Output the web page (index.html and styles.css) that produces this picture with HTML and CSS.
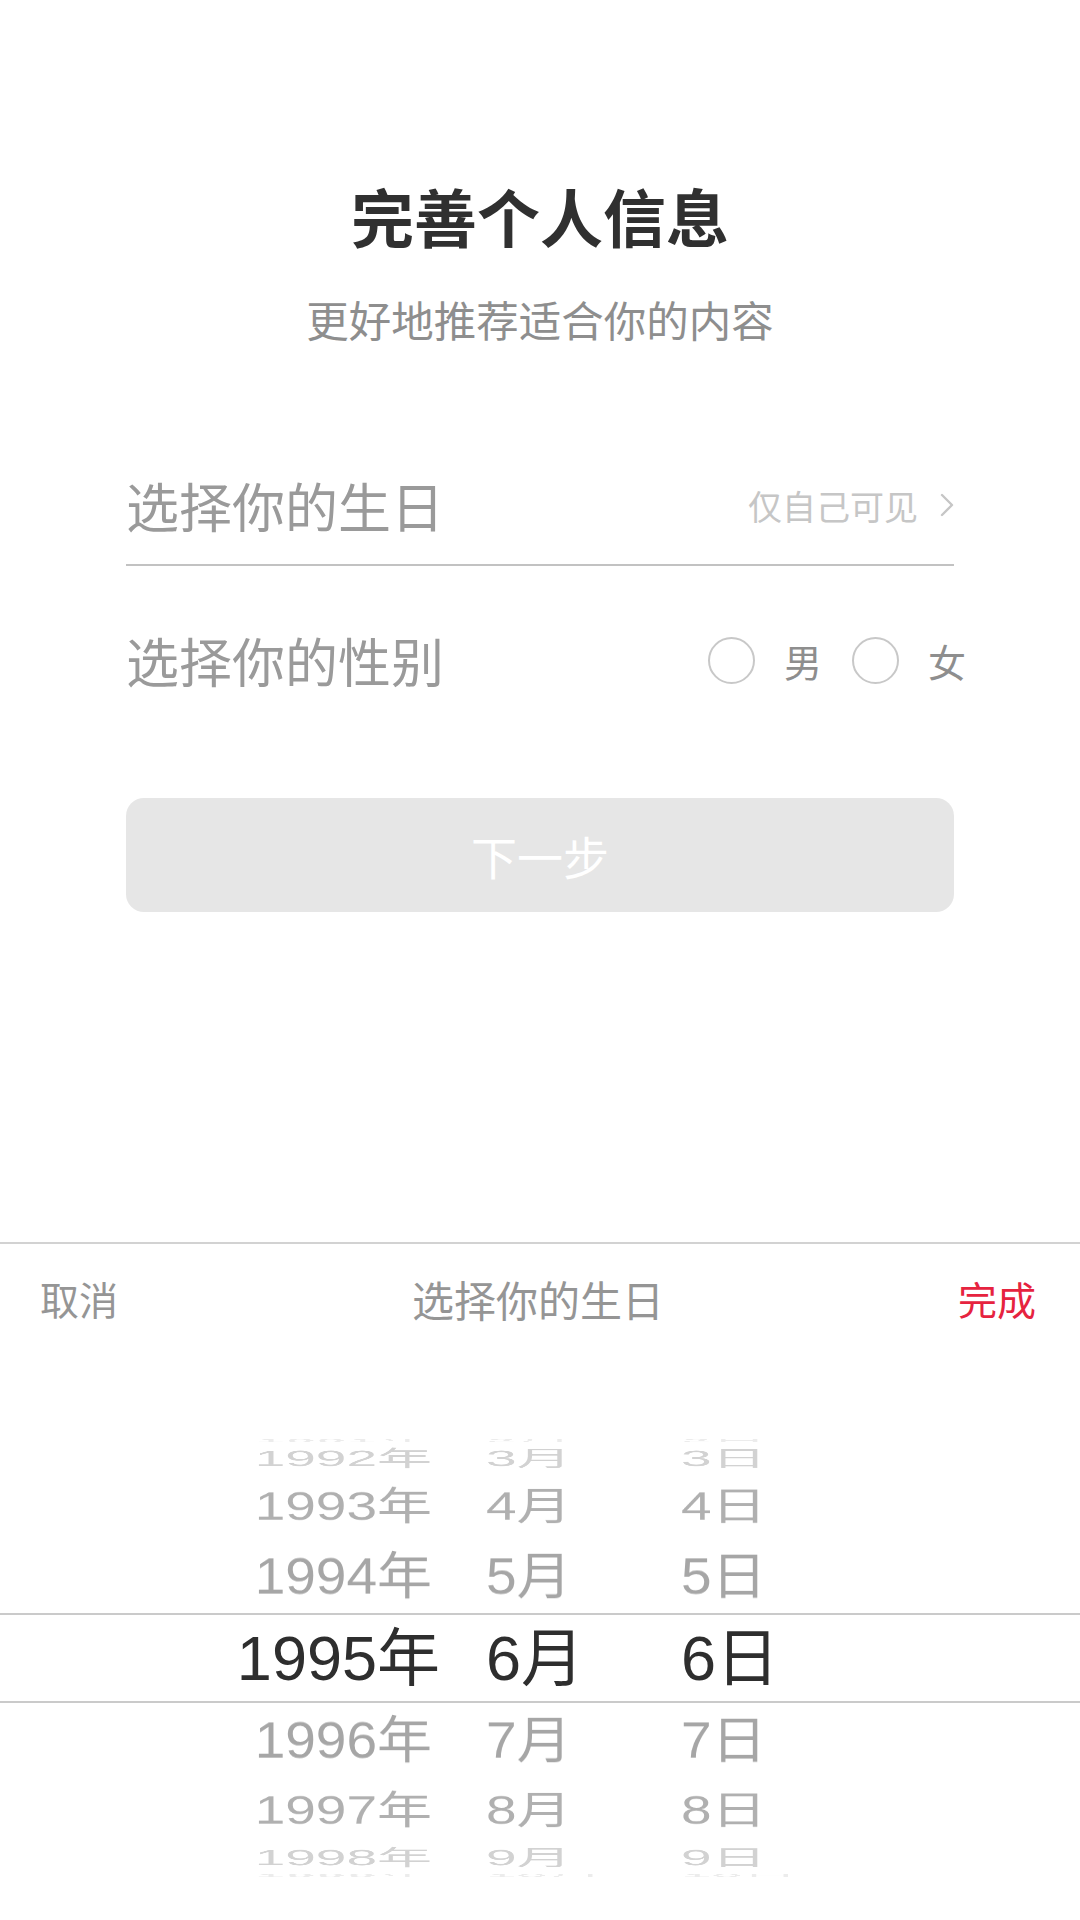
FILE: index.html
```html
<!DOCTYPE html>
<html lang="zh-CN">
  <head>
    <meta charset="UTF-8" />
    <meta name="viewport" content="width=device-width, initial-scale=1.0" />
    <title>完善个人信息</title>
    <link rel="stylesheet" href="styles.css">
  </head>
  <body>
    <div class="page">
      <main class="profile">
        <h1 class="title">完善个人信息</h1>
        <p class="subtitle">更好地推荐适合你的内容</p>

        <div class="field field-birthday">
          <span class="label">选择你的生日</span>
          <span class="hint">
            仅自己可见
            <svg class="chevron" width="14" height="24" viewBox="0 0 14 24">
              <polyline points="2,2 12,12 2,22" fill="none" stroke="#c6c6c6" stroke-width="2.4" stroke-linecap="round" stroke-linejoin="round" />
            </svg>
          </span>
        </div>

        <div class="field field-gender">
          <span class="label">选择你的性别</span>
          <div class="genders">
            <label class="gender"><i class="radio"></i>男</label>
            <label class="gender"><i class="radio"></i>女</label>
          </div>
        </div>

        <button class="next" disabled>下一步</button>
      </main>

      <section class="sheet">
        <header class="sheet-bar">
          <span class="cancel">取消</span>
          <span class="sheet-title">选择你的生日</span>
          <span class="done">完成</span>
        </header>

        <div class="wheel">
          <div class="band"></div>
          <div class="col col-year">
            <span class="up4">1991年</span>
            <span class="up3">1992年</span>
            <span class="up2">1993年</span>
            <span class="up1">1994年</span>
            <span class="sel">1995年</span>
            <span class="dn1">1996年</span>
            <span class="dn2">1997年</span>
            <span class="dn3">1998年</span>
            <span class="dn4">1999年</span>
          </div>
          <div class="col col-month">
            <span class="up4">2月</span>
            <span class="up3">3月</span>
            <span class="up2">4月</span>
            <span class="up1">5月</span>
            <span class="sel">6月</span>
            <span class="dn1">7月</span>
            <span class="dn2">8月</span>
            <span class="dn3">9月</span>
            <span class="dn4">10月</span>
          </div>
          <div class="col col-day">
            <span class="up4">2日</span>
            <span class="up3">3日</span>
            <span class="up2">4日</span>
            <span class="up1">5日</span>
            <span class="sel">6日</span>
            <span class="dn1">7日</span>
            <span class="dn2">8日</span>
            <span class="dn3">9日</span>
            <span class="dn4">10日</span>
          </div>
        </div>
      </section>
    </div>
  </body>
</html>
```

FILE: styles.css
```css
body {
  margin: 0;
  padding: 0;
  background: #fff;
  font-family: "Noto Sans CJK SC", sans-serif;
  color: #999;
}

.page {
  min-height: 100vh;
  display: flex;
  flex-direction: column;
}

/* top form */
.profile {
  padding: 171px 126px 0;
  display: flex;
  flex-direction: column;
}
.title {
  margin: 0;
  font-size: 63px;
  line-height: 88px;
  font-weight: bold;
  color: #303030;
  text-align: center;
}
.subtitle {
  margin: 30px 0 0;
  font-size: 42.5px;
  line-height: 60px;
  color: #8e8e8e;
  text-align: center;
}

.field {
  display: flex;
  align-items: center;
  justify-content: space-between;
}
.field .label {
  font-size: 53px;
  color: #9a9a9a;
}
.field-birthday {
  margin-top: 103px;
  height: 106px;
  padding-bottom: 6px;
  border-bottom: 2px solid #c2c2c2;
}
.hint {
  display: flex;
  align-items: center;
  gap: 22px;
  font-size: 34px;
  color: #c6c6c6;
}
.chevron {
  display: block;
}

.field-gender {
  margin-top: 40px;
  height: 108px;
}
.genders {
  display: flex;
  align-items: center;
  gap: 30px;
  margin-right: -12px;
}
.gender {
  display: flex;
  align-items: center;
  gap: 29px;
  font-size: 38px;
  color: #8e8e8e;
}
.radio {
  width: 43px;
  height: 43px;
  border: 2px solid #c8c8c8;
  border-radius: 50%;
}

.next {
  margin-top: 84px;
  height: 114px;
  border: 0;
  border-radius: 18px;
  background: #e6e6e6;
  color: #fff;
  font-family: inherit;
  font-size: 46px;
  padding: 0;
}

/* date sheet */
.sheet {
  margin-top: auto;
  border-top: 2px solid #d2d2d2;
  padding-bottom: 20px;
}
.sheet-bar {
  height: 108px;
  padding: 0 44px 0 40px;
  display: grid;
  grid-template-columns: 1fr auto 1fr;
  align-items: center;
  font-size: 39px;
}
.cancel {
  color: #959595;
}
.sheet-title {
  font-size: 42px;
  color: #959595;
}
.done {
  justify-self: end;
  color: #e6233f;
}

.wheel {
  position: relative;
  margin-top: 64px;
  height: 484px;
  display: grid;
  grid-template-columns: 440px 195px 1fr;
  overflow: hidden;
  font-family: "Liberation Sans", "Noto Sans CJK SC", sans-serif;
}
.band {
  position: absolute;
  left: 0;
  right: 0;
  top: 197px;
  height: 86px;
  border-top: 2px solid #cacaca;
  border-bottom: 2px solid #cacaca;
}
.col {
  display: grid;
  align-items: center;
}
.col > span {
  grid-area: 1 / 1;
  height: 80px;
  line-height: 80px;
  font-size: 55px;
  white-space: nowrap;
  color: #a6a6a6;
  backface-visibility: hidden;
}
.col-year > span {
  text-align: right;
  padding-right: 8px;
}
.col-month,
.col-day {
  padding-left: 46px;
}

.col > .sel {
  font-size: 63px;
  color: #2e2e2e;
}
.col-year > .sel {
  padding-right: 0;
}
.col > .up4 { transform: rotateX(86deg) translateZ(218px); color: #ececec; }
.col > .up3 { transform: rotateX(66.3deg) translateZ(218px); color: #d2d2d2; }
.col > .up2 { transform: rotateX(44.2deg) translateZ(218px); color: #b0b0b0; }
.col > .up1 { transform: rotateX(22.1deg) translateZ(218px); }
.col > .dn1 { transform: rotateX(-22.1deg) translateZ(218px); }
.col > .dn2 { transform: rotateX(-44.2deg) translateZ(218px); color: #b0b0b0; }
.col > .dn3 { transform: rotateX(-66.3deg) translateZ(218px); color: #d2d2d2; }
.col > .dn4 { transform: rotateX(-86deg) translateZ(218px); color: #ececec; }
```
